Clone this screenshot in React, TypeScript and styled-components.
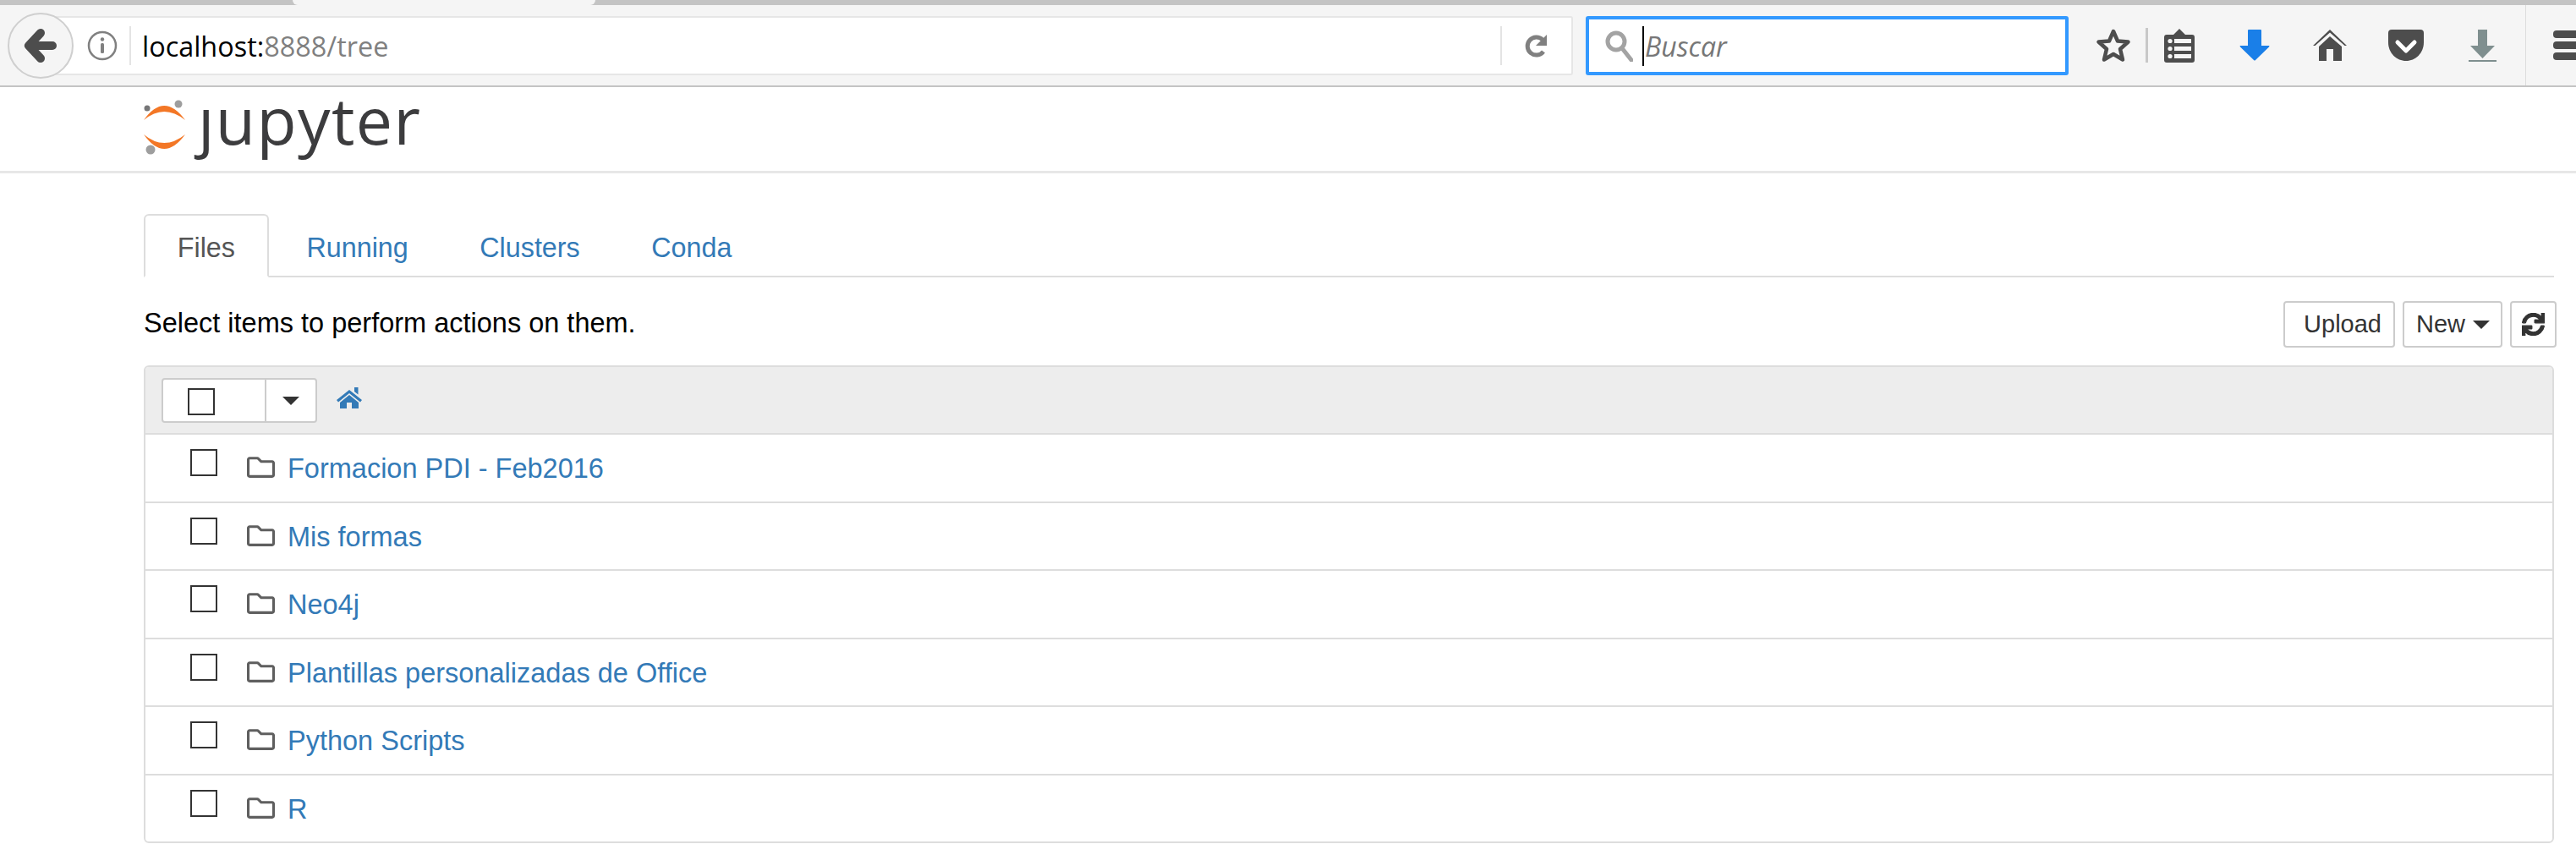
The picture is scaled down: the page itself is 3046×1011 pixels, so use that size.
import { createGlobalStyle } from "styled-components";
import styled from "styled-components";
import { FaRegFolder, FaSync } from "react-icons/fa";

const GlobalStyle = createGlobalStyle`
  html, body {
    margin: 0;
    background: #fff;
    overflow: hidden;
    font-family: "Liberation Sans", Arial, sans-serif;
  }
`;

const Page = styled.div`
  width: 3046px;
  height: 1011px;
  overflow: hidden;
`;

const TabStrip = styled.div`
  height: 6px;
  background: #c4c4c4;
  padding-left: 346px;
`;

const LightTab = styled.div`
  width: 358px;
  height: 6px;
  background: #f5f5f5;
  border-radius: 0 0 12px 12px;
`;

const Toolbar = styled.div`
  display: flex;
  align-items: center;
  height: 95px;
  padding-left: 9px;
  background: #f5f5f5;
  border-bottom: 2px solid #c4c4c4;
`;

const BackButton = styled.div`
  flex: 0 0 78px;
  height: 78px;
  box-sizing: border-box;
  display: flex;
  align-items: center;
  justify-content: center;
  margin-right: -27px;
  position: relative;
  z-index: 1;
  background: #f5f5f5;
  border: 2px solid #cfcfcf;
  border-radius: 50%;
`;

const UrlBar = styled.div`
  flex: 0 0 1800px;
  height: 70px;
  margin-top: 1px;
  box-sizing: border-box;
  display: flex;
  align-items: center;
  padding: 0 27px 0 41px;
  background: #fff;
  border: 2px solid #e6e6e6;
  border-radius: 3px;
`;

const UrlDivider = styled.div`
  flex: 0 0 2px;
  height: 46px;
  background: #e4e4e4;
  margin-left: ${(p: { $left: number }) => p.$left}px;
`;

const UrlText = styled.div`
  flex: 1;
  margin-left: 13px;
  font-family: "Open Sans", sans-serif;
  font-size: 32.4px;
  line-height: 40px;
  color: #808080;
  white-space: nowrap;

  b {
    font-weight: 400;
    color: #000;
  }
`;

const SearchBox = styled.div`
  flex: 0 0 571px;
  height: 70px;
  margin-left: 15px;
  margin-top: 1px;
  box-sizing: border-box;
  display: flex;
  align-items: center;
  padding-left: 18px;
  background: #fff;
  border: 4px solid #39f;
  border-radius: 3px;
`;

const Caret = styled.div`
  flex: 0 0 2px;
  height: 47px;
  margin-left: 11px;
  background: #000;
`;

const SearchText = styled.div`
  margin-left: 1px;
  font-family: "Open Sans", sans-serif;
  font-style: italic;
  font-size: 32px;
  color: #777;
`;

const ToolIcon = styled.svg<{ $left: number }>`
  flex: none;
  display: block;
  margin-left: ${(p) => p.$left}px;
`;

const ToolDivider = styled.div`
  flex: 0 0 3px;
  height: 41px;
  margin-left: 17px;
  background: #c8c8c8;
`;

const WindowDivider = styled.div`
  flex: 0 0 1px;
  align-self: stretch;
  margin-left: 34px;
  background: #ddd;
`;

const Burger = styled.div`
  flex: 0 0 40px;
  margin-left: 32px;
  display: flex;
  flex-direction: column;
  gap: 4px;

  span {
    height: 9px;
    background: #4d4d4d;
    border-radius: 4px;
  }
`;

const Header = styled.div`
  height: 99px;
  display: flex;
  align-items: flex-start;
  padding-left: 169px;
  border-bottom: 3px solid #e7e7e7;
`;

const LogoMark = styled.svg`
  flex: none;
  display: block;
  margin-top: 15px;
`;

const LogoText = styled.div`
  margin-left: 13px;
  margin-top: -14px;
  font-family: "Open Sans", sans-serif;
  font-size: 77px;
  font-weight: 500;
  line-height: 106px;
  letter-spacing: 1.4px;
  color: #3c3c3e;
`;

const Main = styled.div`
  padding: 48px 26px 0 170px;
`;

const Tabs = styled.div`
  display: flex;
  gap: 5px;
  height: 73px;
  border-bottom: 2px solid #ddd;
`;

const Tab = styled.div<{ $active?: boolean }>`
  height: 75px;
  box-sizing: border-box;
  padding: 20px 37.75px 0;
  border: 2px solid ${(p) => (p.$active ? "#ddd" : "transparent")};
  border-bottom-color: ${(p) => (p.$active ? "#fff" : "transparent")};
  border-radius: 6px 6px 0 0;
  background: ${(p) => (p.$active ? "#fff" : "transparent")};
  font-size: 32.3px;
  line-height: 36px;
  color: ${(p) => (p.$active ? "#555" : "#337ab7")};
`;

const ActionRow = styled.div`
  display: flex;
  align-items: flex-start;
  justify-content: space-between;
  margin: 28px -3px 0 0;
  height: 55px;
`;

const Hint = styled.div`
  margin-top: 8px;
  font-size: 32.5px;
  line-height: 36px;
  color: #000;
`;

const ActionButtons = styled.div`
  display: flex;
  gap: 9px;
`;

const ActionButton = styled.div<{ $pad: string }>`
  height: 55px;
  box-sizing: border-box;
  display: flex;
  align-items: center;
  gap: 9px;
  padding: ${(p) => p.$pad};
  background: #fff;
  border: 2px solid #ccc;
  border-radius: 4px;
  font-size: 29px;
  color: #333;
`;

const CaretDown = styled.span`
  width: 0;
  height: 0;
  border-left: 10px solid transparent;
  border-right: 10px solid transparent;
  border-top: 10px solid #333;
`;

const Panel = styled.div`
  margin-top: 21px;
  border: 2px solid #ddd;
  border-radius: 6px;
  overflow: hidden;
`;

const PanelHead = styled.div`
  height: 78px;
  box-sizing: border-box;
  display: flex;
  align-items: flex-start;
  padding: 13px 0 0 19px;
  background: #ededed;
`;

const SelectGroup = styled.div`
  display: flex;
  height: 53px;
  box-sizing: border-box;
  width: 184px;
  background: #fff;
  border: 2px solid #ccc;
  border-radius: 4px;
`;

const SelectLeft = styled.div`
  flex: 0 0 122px;
  padding: 10px 0 0 29px;
  box-sizing: border-box;
  border-right: 2px solid #ccc;
`;

const SelectRight = styled.div`
  flex: 1;
  display: flex;
  align-items: center;
  justify-content: center;
`;

const Check = styled.div`
  width: 32px;
  height: 32px;
  box-sizing: border-box;
  border: 2.5px solid #333;
`;

const HomeLink = styled.svg`
  flex: none;
  display: block;
  margin: 11px 0 0 23px;
`;

const Row = styled.div`
  height: 80.5px;
  box-sizing: border-box;
  display: flex;
  align-items: flex-start;
  padding-left: 53px;
  border-top: 2px solid #ddd;
`;

const RowCheck = styled(Check)`
  margin-top: 17px;
`;

const FolderIcon = styled(FaRegFolder)`
  flex: none;
  width: 33px;
  height: 33px;
  margin: 22px 0 0 35px;
  color: #5f5f5f;
`;

const RowLink = styled.div`
  margin: 22px 0 0 15px;
  font-size: 32.5px;
  line-height: 36px;
  color: #337ab7;
`;

const rows = [
  "Formacion PDI - Feb2016",
  "Mis formas",
  "Neo4j",
  "Plantillas personalizadas de Office",
  "Python Scripts",
  "R",
];

function App() {
  return (
    <Page>
      <GlobalStyle />
      <TabStrip>
        <LightTab />
      </TabStrip>
      <Toolbar>
        <BackButton>
          <svg width="44" height="44" viewBox="0 0 44 44">
            <path
              d="M22 7 L8 22 L22 37 M9 22 H36"
              fill="none"
              stroke="#4d4d4d"
              strokeWidth="10"
              strokeLinecap="round"
              strokeLinejoin="round"
            />
          </svg>
        </BackButton>
        <UrlBar>
          <svg width="36" height="36" viewBox="0 0 36 36">
            <circle cx="18" cy="18" r="16" fill="none" stroke="#808080" strokeWidth="2.5" />
            <circle cx="18" cy="10.5" r="2.2" fill="#808080" />
            <rect x="16" y="15" width="4" height="12" rx="1.5" fill="#808080" />
          </svg>
          <UrlDivider $left={14} />
          <UrlText>
            <b>localhost:</b>8888/tree
          </UrlText>
          <UrlDivider $left={0} />
          <ToolIcon $left={25} width="30" height="32" viewBox="0 0 30 32">
            <path d="M23 9 A10.5 10.5 0 1 0 24 23" fill="none" stroke="#808080" strokeWidth="5" />
            <path d="M28 3 V16 H15 Z" fill="#808080" />
          </ToolIcon>
        </UrlBar>
        <SearchBox>
          <svg width="34" height="38" viewBox="0 0 34 38">
            <circle cx="14" cy="14" r="10" fill="none" stroke="#a3a3a3" strokeWidth="5" />
            <path d="M21 22 L32 36" stroke="#a3a3a3" strokeWidth="5" strokeLinecap="round" />
          </svg>
          <Caret />
          <SearchText>Buscar</SearchText>
        </SearchBox>

        <ToolIcon $left={32} width="42" height="42" viewBox="0 0 42 42">
          <path
            d="M21 4 L26 15.5 L38.5 16.5 L29 25 L32 37.5 L21 31 L10 37.5 L13 25 L3.5 16.5 L16 15.5 Z"
            fill="none"
            stroke="#4d4d4d"
            strokeWidth="4.5"
            strokeLinejoin="round"
          />
        </ToolIcon>
        <ToolDivider />
        <ToolIcon $left={19} width="36" height="40" viewBox="0 0 36 40">
          <path d="M11 7 L18 0 L25 7 H33 Q36 7 36 10 V37 Q36 40 33 40 H3 Q0 40 0 37 V10 Q0 7 3 7 Z" fill="#4d4d4d" />
          <rect x="12" y="12" width="20" height="5" fill="#f5f5f5" />
          <rect x="12" y="21" width="20" height="5" fill="#f5f5f5" />
          <rect x="12" y="30" width="20" height="5" fill="#f5f5f5" />
          <circle cx="7" cy="14.5" r="2.6" fill="#f5f5f5" />
          <circle cx="7" cy="23.5" r="2.6" fill="#f5f5f5" />
          <circle cx="7" cy="32.5" r="2.6" fill="#f5f5f5" />
        </ToolIcon>
        <ToolIcon $left={53} width="36" height="37" viewBox="0 0 36 37">
          <path d="M10 1 Q10 0 11 0 H25 Q26 0 26 1 V19 H35 Q36 19 35 20.5 L19 36 Q18 37 17 36 L1 20.5 Q0 19 1 19 H10 Z" fill="#1a7fe8" />
        </ToolIcon>
        <ToolIcon $left={51} width="40" height="37" viewBox="0 0 40 37">
          <path d="M0 19 L20 0 L40 19 L37.5 19 L20 3.5 L2.5 19 Z" fill="#4d4d4d" />
          <path d="M20 8 L34 20 V37 H24 V23 H16 V37 H7 V20 Z" fill="#4d4d4d" />
        </ToolIcon>
        <ToolIcon $left={49} width="42" height="37" viewBox="0 0 42 37">
          <path d="M4 0 H38 Q42 0 42 4 V15 C42 28 32 37 21 37 C10 37 0 28 0 15 V4 Q0 0 4 0 Z" fill="#4d4d4d" />
          <path d="M11 15 L21 25 L31 15" fill="none" stroke="#fff" strokeWidth="5" strokeLinecap="round" strokeLinejoin="round" />
        </ToolIcon>
        <ToolIcon $left={53} width="33" height="38" viewBox="0 0 33 38">
          <path d="M11 0 H22 V19 H31 L16.5 34 L2 19 H11 Z" fill="#7f8f8f" />
          <rect x="0" y="36" width="33" height="2" fill="#7f8f8f" />
        </ToolIcon>
        <WindowDivider />
        <Burger>
          <span />
          <span />
          <span />
        </Burger>
      </Toolbar>

      <Header>
        <LogoMark width="52" height="68" viewBox="0 0 52 68">
          <path d="M1 24 Q25 -10 50 24 Q25 4 1 24 Z" fill="#f37726" />
          <path d="M1 41 Q25 75 50 41 Q25 61 1 41 Z" fill="#f37726" />
          <circle cx="5" cy="10" r="3.5" fill="#767677" />
          <circle cx="42" cy="5" r="4.5" fill="#9e9e9e" />
          <circle cx="9" cy="59" r="5.5" fill="#9e9e9e" />
        </LogoMark>
        <LogoText>ȷupyter</LogoText>
      </Header>

      <Main>
        <Tabs>
          <Tab $active>Files</Tab>
          <Tab>Running</Tab>
          <Tab>Clusters</Tab>
          <Tab>Conda</Tab>
        </Tabs>

        <ActionRow>
          <Hint>Select items to perform actions on them.</Hint>
          <ActionButtons>
            <ActionButton $pad="0 14px 0 22px">Upload</ActionButton>
            <ActionButton $pad="0 13px 0 14px">
              New
              <CaretDown />
            </ActionButton>
            <ActionButton $pad="0 12px">
              <FaSync size={27} color="#333" stroke="#333" strokeWidth={24} />
            </ActionButton>
          </ActionButtons>
        </ActionRow>

        <Panel>
          <PanelHead>
            <SelectGroup>
              <SelectLeft>
                <Check />
              </SelectLeft>
              <SelectRight>
                <CaretDown />
              </SelectRight>
            </SelectGroup>
            <HomeLink width="30" height="25" viewBox="0 0 30 25">
              <path d="M15 3 L30 15 L28 17.5 L15 7 L2 17.5 L0 15 Z M21 0 H25.5 V8.5 L21 5 Z" fill="#337ab7" />
              <path d="M15 9 L26 18 V25 H18 V18 H12 V25 H4 V18 Z" fill="#337ab7" />
            </HomeLink>
          </PanelHead>
          {rows.map((name) => (
            <Row key={name}>
              <RowCheck />
              <FolderIcon />
              <RowLink>{name}</RowLink>
            </Row>
          ))}
        </Panel>
      </Main>
    </Page>
  );
}

export default App;
